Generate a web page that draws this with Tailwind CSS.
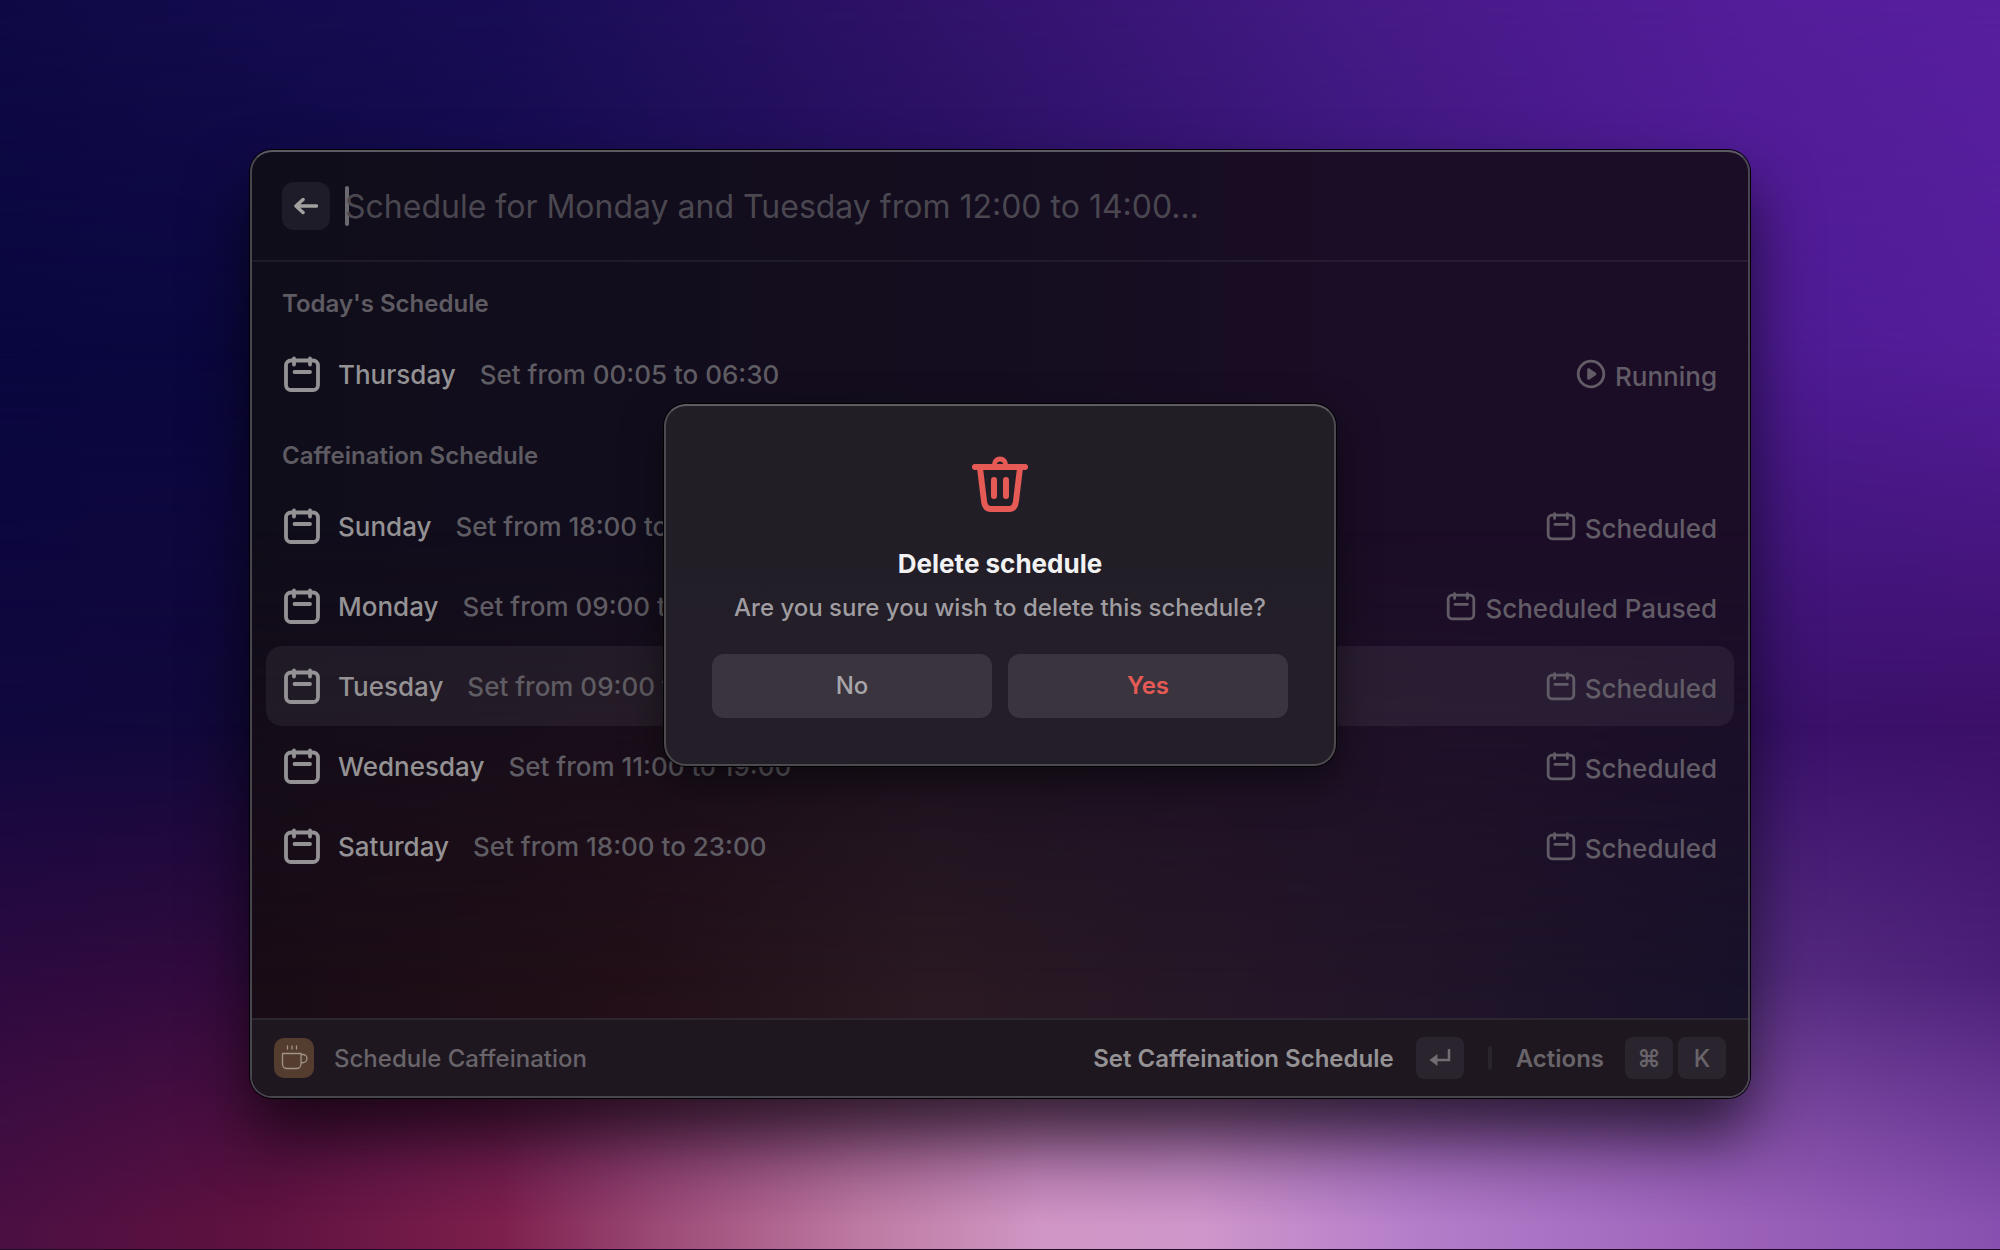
<!DOCTYPE html>
<html lang="en">

<head>
    <meta charset="UTF-8">
    <meta name="viewport" content="width=device-width, initial-scale=1.0">
    <title>Schedule Caffeination</title>
    <script src="https://cdn.jsdelivr.net/npm/@tailwindcss/browser@4"></script>
</head>

<body class="relative isolate min-h-screen font-[Inter,sans-serif] text-[26px] text-[#949294]">
    <!-- Wallpaper: one horizontal gradient per band, each faded into the band above -->
    <div class="absolute inset-0 -z-10 border-b border-[#1a0c24] bg-[linear-gradient(90deg,#0f0a46,#180d55_25%,#2e1268_45%,#451a86_68%,#541d9a_88%,#571f9e)]" aria-hidden="true">
        <div class="absolute inset-0 bg-[linear-gradient(90deg,#09063f,#0b0840_15%,#251060_50%,#4c1b92_85%,#541d99)] [mask-image:linear-gradient(180deg,transparent,#000_28%)]"></div>
        <div class="absolute inset-0 bg-[linear-gradient(90deg,#10083e,#12083a_15%,#251060_50%,#39116b_88%,#3b1069)] [mask-image:linear-gradient(180deg,transparent_28%,#000_58%)]"></div>
        <div class="absolute inset-0 bg-[linear-gradient(90deg,#2c0a40,#340b3e_15%,#5a2060_50%,#552c80_88%,#4b1f78)] [mask-image:linear-gradient(180deg,transparent_58%,#000_78%)]"></div>
        <div class="absolute inset-0 bg-[linear-gradient(90deg,#4b0f42,#5f1240_13%,#7c1f4c_25%,#9c4a76_33%,#bd7aa2_43%,#d096c4_52%,#ce96ca_60%,#b47dca_71%,#9a60b8_88%,#8750b0)] [mask-image:linear-gradient(180deg,transparent_78%,#000_98%)]"></div>
    </div>

    <main class="mx-[12.5%] pt-[150px] pb-[152px]">
        <div class="relative flex min-h-[948px] flex-col rounded-[22px] border-2 border-[#49454f] border-t-[#5c5963] bg-[linear-gradient(90deg,#100d1a,#140d1f_50%,#1c0d27_80%,#1c0d27)] shadow-[0_0_0_1px_#000,0_36px_64px_rgba(0,0,0,0.65)]">
            <div class="absolute inset-0 rounded-[20px] bg-[linear-gradient(90deg,#190c16,#220f17_25%,#2a1922_45%,#241628_70%,#18112a)] [mask-image:linear-gradient(180deg,transparent_40%,#000_90%)]" aria-hidden="true"></div>

            <!-- Search bar -->
            <header class="relative flex h-[110px] shrink-0 items-center border-b-2 border-white/6 px-[30px]">
                <button type="button" aria-label="Back" class="flex size-12 items-center justify-center rounded-xl bg-[#1f1c29]">
                    <svg class="size-6" viewBox="0 0 24 24" fill="none" stroke="#a3a19f" stroke-width="3.500" stroke-linecap="round" stroke-linejoin="round">
                        <path d="M22.500 12H2M9 5.500 2 12l7 6.500" />
                    </svg>
                </button>
                <span class="ml-[15px] h-10 w-1 rounded-full bg-[#6b6970]"></span>
                <input type="text" aria-label="Schedule" placeholder="Schedule for Monday and Tuesday from 12:00 to 14:00…"
                    class="-ml-1 h-12 min-w-0 flex-1 bg-transparent pt-0.5 text-[32px] outline-none placeholder:text-[#4a4750]">
            </header>

            <!-- Schedules -->
            <div class="relative flex-1 px-3.5">
                <h2 class="flex h-[72px] items-center px-4 pt-3 text-2xl font-semibold text-[#5e5b62]">Today's Schedule</h2>
                <ul id="today"></ul>
                <h2 class="flex h-[72px] items-center px-4 pt-3 text-2xl font-semibold text-[#5e5b62]">Caffeination Schedule</h2>
                <ul id="week"></ul>
            </div>

            <!-- Action bar -->
            <footer class="relative flex h-[78px] shrink-0 items-center rounded-b-[20px] border-t-2 border-[#2c2630] bg-[#1f1720] px-[22px] text-2xl font-medium text-[#68646a]">
                <span class="flex size-10 items-center justify-center rounded-[10px] bg-[#543d2e]">
                    <svg class="size-10" viewBox="0 0 40 40" fill="none" stroke="#a09489" stroke-width="1.300" stroke-linecap="round" stroke-linejoin="round">
                        <path d="M8.500 15.500h18.500v10.500a4.500 4.500 0 0 1-4.500 4.500h-9.500a4.500 4.500 0 0 1-4.500-4.500zM27 16.500h2a4 4 0 0 1 4 4c0 2.500-2.500 4.500-6 4.500M13.500 8v3M18 8v3M22.500 8v3" />
                    </svg>
                </span>
                <span class="ml-5 pt-0.5">Schedule Caffeination</span>
                <button type="button" class="ml-auto flex items-center gap-[22px] font-semibold text-[#949294]">
                    <span class="pt-0.5">Set Caffeination Schedule</span>
                    <kbd class="flex h-[42px] w-12 items-center justify-center rounded-lg bg-[#2a242e]">
                        <svg class="size-6" viewBox="0 0 24 24" fill="none" stroke="#716d73" stroke-width="2.500">
                            <path d="M21 3v11H7" />
                            <path d="M9.500 8v12l-8-6z" fill="#716d73" stroke="none" />
                        </svg>
                    </kbd>
                </button>
                <span class="mx-6 h-6 w-1 rounded-full bg-[#2a242e]"></span>
                <button type="button" class="flex items-center font-semibold">
                    <span class="pt-0.5">Actions</span>
                    <kbd class="ml-[21px] flex h-[42px] w-12 items-center justify-center rounded-lg bg-[#2a242e] pt-0.5 font-[Inter,sans-serif]">⌘</kbd>
                    <kbd class="ml-[5px] flex h-[42px] w-12 items-center justify-center rounded-lg bg-[#2a242e] pt-0.5 font-[Inter,sans-serif] font-medium">K</kbd>
                </button>
            </footer>

            <!-- Confirmation -->
            <div role="alertdialog" aria-labelledby="alertTitle" aria-describedby="alertText"
                class="absolute top-[252px] left-1/2 flex w-[672px] -translate-x-1/2 flex-col items-center rounded-[22px] border-2 border-[#4c494f] border-t-[#5f5c61] bg-[linear-gradient(180deg,#211e26,#241e28)] px-[46px] pt-[50px] pb-[46px] shadow-[0_0_0_1px_#000,0_16px_40px_rgba(0,0,0,0.5)]">
                <svg class="size-14" viewBox="0 0 56 56" fill="none" stroke="#e65a55" stroke-width="6" stroke-linecap="round" stroke-linejoin="round">
                    <path d="M3 11h50M8 12l4 33c.5 5 3 8 7 8h18c4 0 6.500-3 7-8l4-33M22 24v16M34 24v16" />
                    <path d="M22.500 11V8.500a5.500 5.500 0 0 1 11 0V11" stroke-width="5" />
                </svg>
                <h1 id="alertTitle" class="mt-8 text-[26px]/[40px] font-bold text-[#f3f2f3]">Delete schedule</h1>
                <p id="alertText" class="mt-1 text-2xl/[40px] font-medium text-[#9f9da1]">Are you sure you wish to delete this schedule?</p>
                <div class="mt-[26px] grid w-full grid-cols-2 gap-4 text-2xl">
                    <button type="button" class="h-16 rounded-xl bg-[#39343d] font-medium text-[#a8a6aa]">No</button>
                    <button type="button" class="h-16 rounded-xl bg-[#39343d] font-semibold text-[#e65a55]">Yes</button>
                </div>
            </div>
        </div>
    </main>

    <script>
        const today = [
            { day: 'Thursday', from: '00:05', to: '06:30', status: 'Running' },
        ];
        const week = [
            { day: 'Sunday', from: '18:00', to: '23:00', status: 'Scheduled' },
            { day: 'Monday', from: '09:00', to: '18:00', status: 'Scheduled Paused' },
            { day: 'Tuesday', from: '09:00', to: '18:00', status: 'Scheduled', selected: true },
            { day: 'Wednesday', from: '11:00', to: '19:00', status: 'Scheduled' },
            { day: 'Saturday', from: '18:00', to: '23:00', status: 'Scheduled' },
        ];

        const calendar = '<rect x="4" y="6.500" width="32" height="29.500" rx="5" /><path d="M12 4.500v6M28 4.500v6M12.500 18h15.500" />';
        const play = '<circle cx="20" cy="20" r="16" /><path d="M17 14.500v11l8-5.500z" fill="currentColor" />';

        function loadRows(id, rows) {
            document.getElementById(id).innerHTML = rows.map(row => `
                <li class="flex h-20 items-center rounded-2xl px-4 ${row.selected ? 'bg-white/6' : ''}">
                    <svg class="size-10 text-[#949294]" viewBox="0 0 40 40" fill="none" stroke="currentColor" stroke-width="3.800" stroke-linecap="round">${calendar}</svg>
                    <span class="ml-4 font-medium">${row.day}</span>
                    <span class="ml-6 font-medium text-[#5f5c63]">Set from ${row.from} to ${row.to}</span>
                    <span class="ml-auto mr-px flex items-center gap-2 text-[#625c66]">
                        <svg class="size-8" viewBox="0 0 40 40" fill="none" stroke="currentColor" stroke-width="3.500" stroke-linecap="round" stroke-linejoin="round">${row.status === 'Running' ? play : calendar}</svg>
                        <span class="pt-1 font-medium">${row.status}</span>
                    </span>
                </li>`).join('');
        }

        loadRows('today', today);
        loadRows('week', week);
    </script>
</body>

</html>
